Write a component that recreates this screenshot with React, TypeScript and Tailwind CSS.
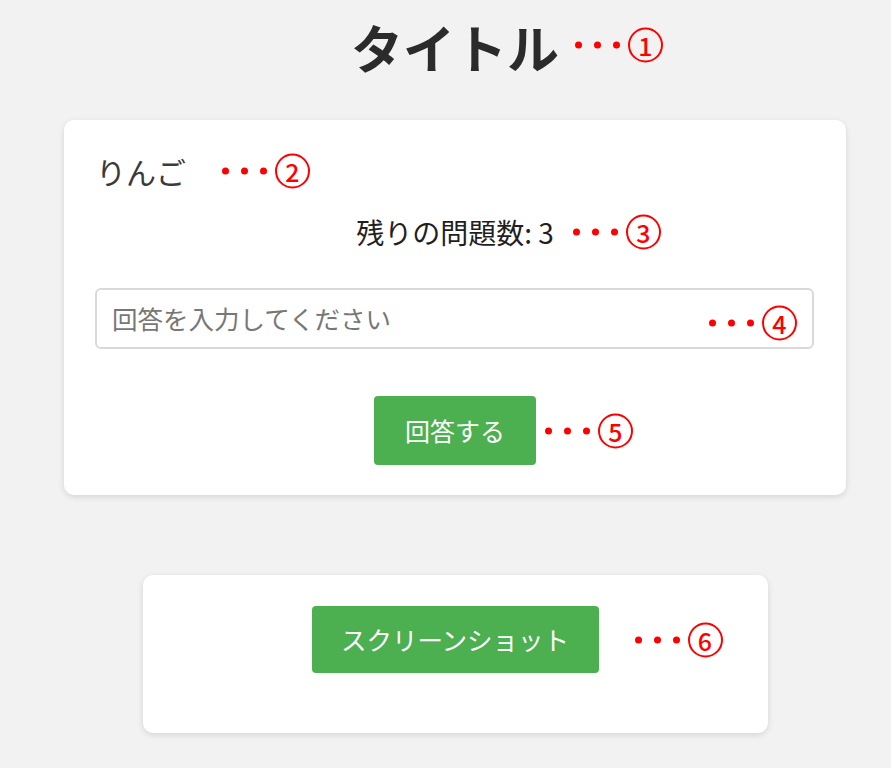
import React from "react";

function Note({ n, className = "" }: { n: string; className?: string }) {
  return (
    <div className={`absolute flex items-center ${className}`}>
      <span className="w-[7px] h-[7px] rounded-full bg-[#ff0000]" />
      <span className="w-[7px] h-[7px] rounded-full bg-[#ff0000] ml-[12px]" />
      <span className="w-[7px] h-[7px] rounded-full bg-[#ff0000] ml-[12px]" />
      <span className="ml-[8px] w-[35px] h-[35px] rounded-full border-2 border-[#ff0000] flex items-center justify-center text-[#ff0000] text-[25px] leading-none font-medium">
        {n}
      </span>
    </div>
  );
}

export default function App() {
  return (
    <div
      className="min-h-screen w-[891px] bg-[#f2f2f2] pt-[17px] pb-[40px]"
      style={{ fontFamily: '"Noto Sans CJK JP", "Noto Sans", sans-serif' }}
    >
      <div className="ml-[64px] w-[782px] flex flex-col items-center">
        <h1 className="relative text-[52px] leading-[60px] font-bold text-[#2b2b2b]">
          タイトル
          <Note n="1" className="left-full ml-[16px] top-1/2 -translate-y-1/2 -mt-[2px]" />
        </h1>

        <div className="mt-[43px] w-[782px] bg-white rounded-[10px] shadow-[0_2px_6px_rgba(0,0,0,0.12)] pt-[33px] pb-[30px] px-[31px] flex flex-col">
          <div className="self-start relative text-[30px] leading-[36px] text-[#3a3a3a] ml-[1px]">
            りんご
            <Note n="2" className="left-full ml-[36px] top-1/2 -translate-y-1/2" />
          </div>
          <div className="self-center relative mt-[27px] text-[28px] leading-[32px] text-[#1f1f1f]">
            残りの問題数: 3
            <Note n="3" className="left-full ml-[19px] top-1/2 -translate-y-1/2" />
          </div>
          <div className="relative mt-[40px] h-[61px] w-[719px] self-start border-2 border-[#d9d9d9] rounded-[6px] flex items-center pl-[15px] text-[25.5px] text-[#777777]">
            回答を入力してください
            <Note n="4" className="right-[15px] top-1/2 -translate-y-1/2 mt-[4px]" />
          </div>
          <div className="self-center relative mt-[47px]">
            <button className="h-[69px] w-[162px] bg-[#4caf50] rounded-[4px] text-white text-[25px] flex items-center justify-center">
              回答する
            </button>
            <Note n="5" className="left-full ml-[9px] top-1/2 -translate-y-1/2" />
          </div>
        </div>

        <div className="mt-[80px] w-[625px] bg-white rounded-[10px] shadow-[0_2px_6px_rgba(0,0,0,0.12)] pt-[31px] pb-[60px] flex justify-center">
          <div className="relative">
            <button className="h-[67px] w-[287px] bg-[#4caf50] rounded-[4px] text-white text-[25.5px] flex items-center justify-center">
              スクリーンショット
            </button>
            <Note n="6" className="left-full ml-[36px] top-1/2 -translate-y-1/2" />
          </div>
        </div>
      </div>
    </div>
  );
}
